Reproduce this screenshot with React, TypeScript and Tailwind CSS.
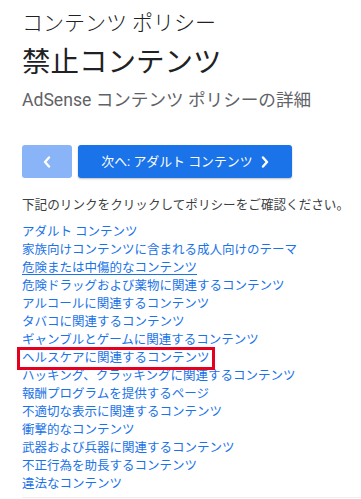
import React from "react";

const links = [
  "アダルト コンテンツ",
  "家族向けコンテンツに含まれる成人向けのテーマ",
  "危険または中傷的なコンテンツ",
  "危険ドラッグおよび薬物に関連するコンテンツ",
  "アルコールに関連するコンテンツ",
  "タバコに関連するコンテンツ",
  "ギャンブルとゲームに関連するコンテンツ",
  "ヘルスケアに関連するコンテンツ",
  "ハッキング、クラッキングに関連するコンテンツ",
  "報酬プログラムを提供するページ",
  "不適切な表示に関連するコンテンツ",
  "衝撃的なコンテンツ",
  "武器および兵器に関連するコンテンツ",
  "不正行為を助長するコンテンツ",
  "違法なコンテンツ",
];

function Chevron({ dir }: { dir: "left" | "right" }) {
  return (
    <svg width="8" height="12" viewBox="0 0 8 12" fill="none">
      <path
        d={dir === "right" ? "M2 1.5 L6 6 L2 10.5" : "M6 1.5 L2 6 L6 10.5"}
        stroke="white"
        strokeWidth="2.4"
        strokeLinecap="round"
        strokeLinejoin="round"
      />
    </svg>
  );
}

export default function App() {
  return (
    <div
      className="w-[361px] h-[499px] overflow-hidden bg-white pl-[22px]"
      style={{ fontFamily: 'Roboto, "Noto Sans CJK JP", sans-serif' }}
    >
      <div className="pt-[8px] text-[21px] leading-[30px] text-[#202124] font-light">コンテンツ ポリシー</div>
      <div className="mt-[5px] text-[28.5px] leading-[40px] text-[#202124]">禁止コンテンツ</div>
      <div className="text-[17.6px] leading-[34px] text-[#5f6368]">AdSense コンテンツ ポリシーの詳細</div>

      <div className="mt-[28px] flex gap-[6px]">
        <div className="w-[50px] h-[33px] rounded-[3px] bg-[#8ab4f8] flex items-center justify-center">
          <Chevron dir="left" />
        </div>
        <div className="w-[214px] h-[33px] rounded-[3px] bg-[#1a73e8] shadow-[0_1px_2px_rgba(0,0,0,0.25)] flex items-center justify-center gap-[8px] text-white text-[12.9px]">
          <span>次へ: アダルト コンテンツ</span>
          <Chevron dir="right" />
        </div>
      </div>

      <div className="mt-[16.5px] text-[12.6px] leading-[20px] text-[#3c4043]">
        下記のリンクをクリックしてポリシーをご確認ください。
      </div>

      <ul className="mt-[8px] text-[12.5px] leading-[18px] text-[#1a73e8]">
        {links.map((l, i) => (
          <li key={i}>
            {i === 7 ? (
              <span className="relative inline-block">
                {l}
                <span className="absolute -left-[5px] -right-[5px] -top-[2px] -bottom-[3px] border-[3px] border-[#e60020]" />
              </span>
            ) : (
              <span className={i === 2 ? "underline underline-offset-2" : ""}>{l}</span>
            )}
          </li>
        ))}
      </ul>
      <div className="mt-[4px] border-t border-[#f0f0f0]" />
    </div>
  );
}
